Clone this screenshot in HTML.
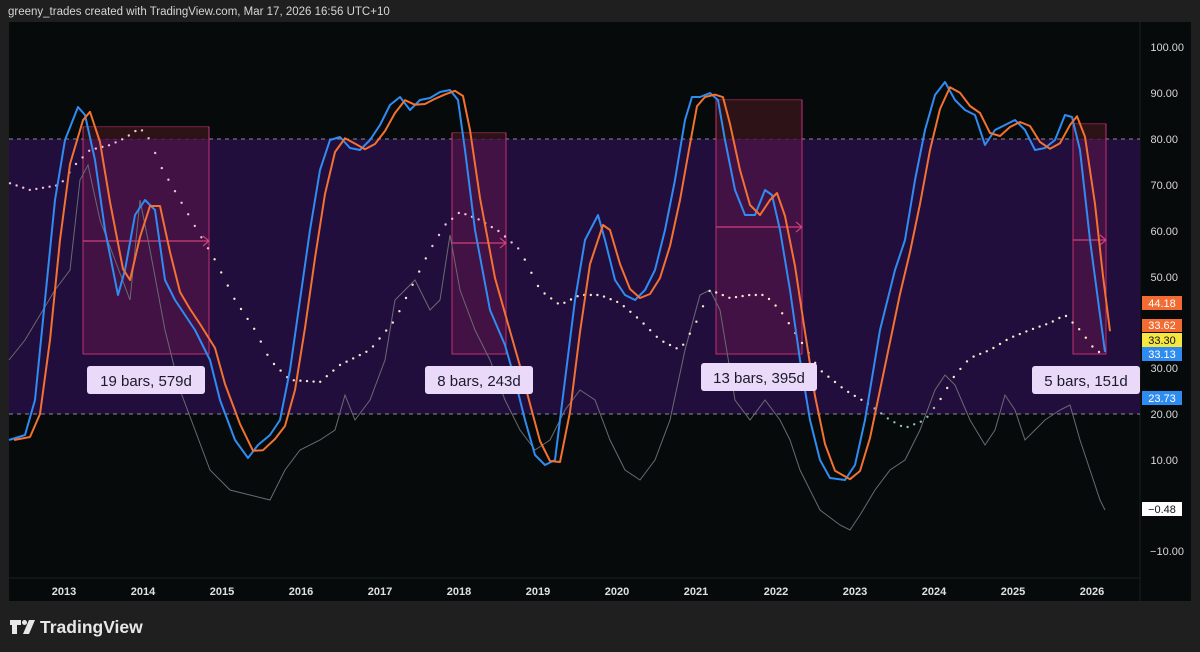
<!DOCTYPE html>
<html><head><meta charset="utf-8"><style>
html,body{margin:0;padding:0;background:#1f1f1f;width:1200px;height:652px;overflow:hidden;font-family:"Liberation Sans",sans-serif}
</style></head><body>
<svg id="s" width="1200" height="652" xmlns="http://www.w3.org/2000/svg" style="position:absolute;left:0;top:0">
<rect width="1200" height="652" fill="#1f1f1f"/>
<text x="8" y="15" fill="#d6d6d6" font-size="11.5" font-family="Liberation Sans">greeny_trades created with TradingView.com, Mar 17, 2026 16:56 UTC+10</text>
<rect x="9" y="22" width="1182" height="579" fill="#060a0a"/>
<line x1="1140" y1="22" x2="1140" y2="601" stroke="#1a1f1f"/>
<line x1="9" y1="578" x2="1140" y2="578" stroke="#1a2222"/>
<rect x="9" y="139" width="1131" height="275" fill="#220e3c"/>
<line x1="9" y1="139" x2="1140" y2="139" stroke="#8a8a9a" stroke-dasharray="4,4"/>
<line x1="9" y1="414" x2="1140" y2="414" stroke="#8a8a9a" stroke-dasharray="4,4"/>
<g fill="#4e1446" fill-opacity="0.7" stroke="#c03070" stroke-width="1">
<rect x="83" y="127" width="126" height="227"/>
<rect x="452" y="133" width="54" height="221"/>
<rect x="716" y="100" width="86" height="254"/>
<rect x="1073" y="124" width="33" height="230"/>
</g>
<g fill="#2a1410" fill-opacity="0.8">
<rect x="84" y="127" width="124" height="12"/><rect x="453" y="133" width="52" height="6"/><rect x="717" y="100" width="84" height="39"/><rect x="1074" y="124" width="31" height="15"/>
</g>
<g stroke="#d0407a" stroke-width="1.2" fill="none">
<path d="M83 241H209M203 236l6 5-6 5"/><path d="M452 243H506M500 238l6 5-6 5"/><path d="M716 227H802M796 222l6 5-6 5"/><path d="M1073 240H1106M1100 235l6 5-6 5"/>
</g>
<polyline id="grey" fill="none" stroke="#6a6a72" stroke-width="1" points="9,360 25,340 40,315 55,290 70,270 80,180 88,165 100,220 115,260 130,300 140,200 150,250 165,330 180,390 195,430 210,470 230,490 250,495 270,500 285,470 300,450 320,440 335,430 345,395 355,420 370,400 385,360 395,300 405,290 415,280 430,310 440,300 450,235 460,290 475,330 490,360 505,400 520,430 535,450 550,440 565,410 580,390 595,400 610,440 625,470 640,480 655,460 670,420 685,350 700,295 710,290 720,310 735,400 750,420 765,400 780,420 790,440 800,470 820,510 840,525 850,530 860,515 875,490 890,470 905,460 920,430 935,390 945,375 955,385 970,420 985,445 995,430 1005,395 1015,410 1025,440 1035,430 1045,420 1060,410 1070,405 1080,440 1090,470 1100,500 1105,510"/>
<g id="dots"></g>
<polyline id="blue" fill="none" stroke="#2f8cf2" stroke-width="2" stroke-linejoin="round" points="9,440 25,435 35,400 45,300 55,200 65,140 78,107 85,115 95,160 105,230 118,295 125,270 135,215 145,200 155,210 165,280 175,300 185,315 195,330 210,360 220,400 235,440 248,458 258,445 270,435 280,420 290,370 300,300 310,230 320,170 330,140 340,137 350,148 360,150 370,140 380,125 390,105 400,97 410,110 420,100 430,98 440,92 450,90 458,100 465,150 475,230 490,310 505,345 515,380 525,420 535,455 545,465 555,460 565,380 575,300 585,240 598,215 605,240 615,280 625,295 635,300 645,290 655,270 665,230 675,180 685,120 692,97 700,97 710,93 718,100 725,140 735,190 745,215 755,215 765,190 772,195 780,230 790,290 800,360 810,420 820,460 830,478 845,480 855,465 865,420 880,330 895,270 905,240 915,180 925,130 935,95 945,82 955,100 965,110 975,115 985,145 995,130 1005,125 1015,120 1025,130 1035,150 1045,148 1055,140 1065,115 1072,117 1080,150 1090,240 1098,300 1105,352"/>
<polyline id="orange" fill="none" stroke="#f37131" stroke-width="2" stroke-linejoin="round"/>
<g font-family="Liberation Sans" font-size="15" fill="#1a1a2a">
<rect x="87" y="366" width="118" height="28" rx="3" fill="#ead9f8"/><text x="146" y="386" text-anchor="middle" fill="#1a1a2a">19 bars, 579d</text>
<rect x="425" y="366" width="108" height="28" rx="3" fill="#ead9f8"/><text x="479" y="386" text-anchor="middle" fill="#1a1a2a">8 bars, 243d</text>
<rect x="701" y="363" width="116" height="28" rx="3" fill="#ead9f8"/><text x="759" y="383" text-anchor="middle" fill="#1a1a2a">13 bars, 395d</text>
<rect x="1032" y="366" width="108" height="28" rx="3" fill="#ead9f8"/><text x="1086" y="386" text-anchor="middle" fill="#1a1a2a">5 bars, 151d</text>
</g>
<g font-family="Liberation Sans" font-size="11" fill="#d8d8d8" text-anchor="end">
<text x="1184" y="51">100.00</text><text x="1178" y="97">90.00</text><text x="1178" y="143">80.00</text><text x="1178" y="189">70.00</text><text x="1178" y="235">60.00</text><text x="1178" y="281">50.00</text><text x="1178" y="372">30.00</text><text x="1178" y="418">20.00</text><text x="1178" y="464">10.00</text><text x="1184" y="555">−10.00</text>
</g>
<g font-family="Liberation Sans" font-size="11" text-anchor="middle">
<rect x="1142" y="296" width="40" height="14" fill="#f26b32"/><text x="1162" y="307" fill="#fff">44.18</text>
<rect x="1142" y="319" width="40" height="13" fill="#f26b32"/><text x="1162" y="329" fill="#fff">33.62</text>
<rect x="1142" y="333" width="40" height="14" fill="#f5e642"/><text x="1162" y="344" fill="#111">33.30</text>
<rect x="1142" y="347" width="40" height="14" fill="#2e8cf0"/><text x="1162" y="358" fill="#fff">33.13</text>
<rect x="1142" y="391" width="40" height="14" fill="#2e8cf0"/><text x="1162" y="402" fill="#fff">23.73</text>
<rect x="1142" y="502" width="40" height="14" fill="#ffffff"/><text x="1162" y="513" fill="#111">−0.48</text>
</g>
<g font-family="Liberation Sans" font-size="11" font-weight="bold" fill="#e0e0e0" text-anchor="middle">
<text x="64" y="595">2013</text><text x="143" y="595">2014</text><text x="222" y="595">2015</text><text x="301" y="595">2016</text><text x="380" y="595">2017</text><text x="459" y="595">2018</text><text x="538" y="595">2019</text><text x="617" y="595">2020</text><text x="696" y="595">2021</text><text x="776" y="595">2022</text><text x="855" y="595">2023</text><text x="934" y="595">2024</text><text x="1013" y="595">2025</text><text x="1092" y="595">2026</text>
</g>
<g fill="#e8e8e8">
<path d="M10 620h11v5h-4v9h-5v-9h-2z"/><circle cx="24.5" cy="622.5" r="2.5"/><path d="M29 620h6l-6 14h-6z"/>
</g>
<text x="40" y="633" font-family="Liberation Sans" font-size="17.5" font-weight="bold" fill="#e8e8e8">TradingView</text>
</svg>
<script>
(function(){
var b=document.getElementById('blue').getAttribute('points').trim().split(/\s+/).map(function(p){return p.split(',').map(Number)});
var o=b.map(function(p,i){var q=b[Math.max(0,i-1)];return (p[0]+5)+','+((p[1]*0.6+q[1]*0.4).toFixed(1))});
document.getElementById('orange').setAttribute('points',o.join(' '));
var pts=[[9,183],[30,190],[60,185],[75,165],[90,150],[110,145],[125,138],[140,128],[150,140],[160,165],[180,200],[200,235],[215,260],[235,300],[255,330],[270,360],[290,380],[320,382],[340,365],[370,350],[395,320],[410,290],[430,250],[445,225],[460,212],[480,220],[500,232],[520,250],[540,290],[560,305],[580,295],[600,295],[620,303],[640,320],[660,340],[680,350],[695,325],[710,290],[730,298],[750,295],[765,295],[780,310],[800,340],[820,370],[845,390],[870,405],[890,420],[905,428],[925,420],[940,400],[955,375],[970,358],[990,350],[1010,338],[1030,330],[1050,323],[1065,315],[1080,330],[1095,350],[1105,355]];
var g=document.getElementById('dots'),h='';
for(var x=10;x<1106;x+=6.6){for(var i=0;i<pts.length-1;i++){if(x>=pts[i][0]&&x<=pts[i+1][0]){var t=(x-pts[i][0])/(pts[i+1][0]-pts[i][0]);var y=pts[i][1]+t*(pts[i+1][1]-pts[i][1]);var c=y<250?'#f4c0dc':(y<400?'#fbe8cc':'#90c0b0');h+='<circle cx="'+x.toFixed(1)+'" cy="'+y.toFixed(1)+'" r="1.2" fill="'+c+'"/>';break;}}}
g.innerHTML=h;
})();
</script>
</body></html>
